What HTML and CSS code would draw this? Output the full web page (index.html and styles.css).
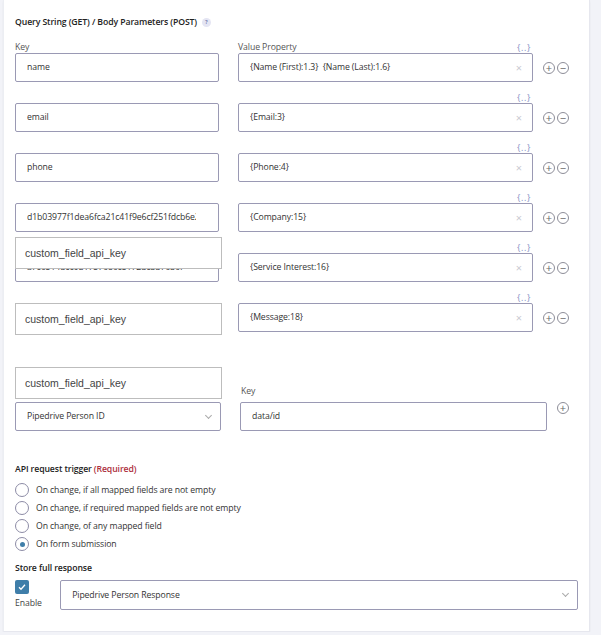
FILE: index.html
```html
<!DOCTYPE html>
<html lang="en">
<head>
<meta charset="UTF-8">
<meta name="viewport" content="width=device-width, initial-scale=1">
<title>API request settings</title>
<link rel="stylesheet" href="styles.css">
</head>
<body>
<div class="card">
  <h3 class="title">Query String (GET) / Body Parameters (POST) <span class="help">?</span></h3>

  <div class="params">
    <div class="row">
      <div class="kcol"><div class="lbl">Key</div><div class="inp"><span class="txt">name</span></div></div>
      <div class="vcol">
        <div class="lbl"><span>Value Property</span><span class="tag">{..}</span></div>
        <div class="inp val"><span class="txt">{Name (First):1.3}&nbsp; {Name (Last):1.6}</span><span class="clr">×</span></div>
      </div>
      <div class="ops"><span class="op">+</span><span class="op">−</span></div>
    </div>
    <div class="row">
      <div class="kcol"><div class="lbl"></div><div class="inp"><span class="txt">email</span></div></div>
      <div class="vcol">
        <div class="lbl"><span></span><span class="tag">{..}</span></div>
        <div class="inp val"><span class="txt">{Email:3}</span><span class="clr">×</span></div>
      </div>
      <div class="ops"><span class="op">+</span><span class="op">−</span></div>
    </div>
    <div class="row">
      <div class="kcol"><div class="lbl"></div><div class="inp"><span class="txt">phone</span></div></div>
      <div class="vcol">
        <div class="lbl"><span></span><span class="tag">{..}</span></div>
        <div class="inp val"><span class="txt">{Phone:4}</span><span class="clr">×</span></div>
      </div>
      <div class="ops"><span class="op">+</span><span class="op">−</span></div>
    </div>
    <div class="row">
      <div class="kcol">
        <div class="lbl"></div>
        <div class="inp key"><span class="txt">d1b03977f1dea6fca21c41f9e6cf251fdcb6e2a4</span></div>
        <!-- autocomplete list opened under the key field -->
        <div class="suggest pop">custom_field_api_key</div>
      </div>
      <div class="vcol">
        <div class="lbl"><span></span><span class="tag">{..}</span></div>
        <div class="inp val"><span class="txt">{Company:15}</span><span class="clr">×</span></div>
      </div>
      <div class="ops"><span class="op">+</span><span class="op">−</span></div>
    </div>
    <div class="row">
      <div class="kcol"><div class="lbl"></div><div class="inp key"><span class="txt">a7c6514bcc0d1757686c5172bc3b7636f</span></div></div>
      <div class="vcol">
        <div class="lbl"><span></span><span class="tag">{..}</span></div>
        <div class="inp val"><span class="txt">{Service Interest:16}</span><span class="clr">×</span></div>
      </div>
      <div class="ops"><span class="op">+</span><span class="op">−</span></div>
    </div>
    <div class="row">
      <div class="kcol"><div class="lbl"></div><div class="suggest">custom_field_api_key</div></div>
      <div class="vcol">
        <div class="lbl"><span></span><span class="tag">{..}</span></div>
        <div class="inp val"><span class="txt">{Message:18}</span><span class="clr">×</span></div>
      </div>
      <div class="ops"><span class="op">+</span><span class="op">−</span></div>
    </div>
  </div>

  <div class="resp">
    <div class="rcol1">
      <div class="suggest">custom_field_api_key</div>
      <div class="inp sel"><span class="txt">Pipedrive Person ID</span><span class="chev"></span></div>
    </div>
    <div class="rcol2">
      <div class="lbl">Key</div>
      <div class="inp"><span class="txt">data/id</span></div>
    </div>
    <div class="ops top"><span class="op">+</span></div>
  </div>

  <h4 class="sub">API request trigger <span class="req">(Required)</span></h4>
  <ul class="radios">
    <li><span class="radio"></span>On change, if all mapped fields are not empty</li>
    <li><span class="radio"></span>On change, if required mapped fields are not empty</li>
    <li><span class="radio"></span>On change, of any mapped field</li>
    <li><span class="radio on"></span>On form submission</li>
  </ul>

  <h4 class="sub store">Store full response</h4>
  <div class="store-row">
    <div class="enable">
      <span class="check"><svg viewBox="0 0 14 14" width="14" height="14"><path d="M4 7.2l2 2 4-4.4" fill="none" stroke="#fff" stroke-width="1.3"/></svg></span>
      <span>Enable</span>
    </div>
    <div class="inp sel wide"><span class="txt">Pipedrive Person Response</span><span class="chev"></span></div>
  </div>
</div>
</body>
</html>
```

FILE: styles.css
```css
:root{
  --bg:#f2f3f8;--card:#fff;--text:#333;--sub:#555;--line:#9a99b4;--gray:#bdbdbd;
  --tag:#8793c6;--blue:#3f7ea9;--req:#ad2e3c
}
*{box-sizing:border-box;margin:0;padding:0}
body{background:var(--bg);font-family:"Open Sans","Noto Sans",Arial,sans-serif;font-size:8.7px;letter-spacing:-.1px;color:var(--text)}
.card{background:var(--card);margin-left:3px;width:587px;padding:15px 11px 21px;border-right:1px solid #e6e7ee;border-bottom:1px solid #e6e7ee;box-shadow:0 1px 2px rgba(0,0,0,.05);border-left:1px solid #eceef3}
.title{font-size:8.7px;font-weight:600;line-height:14px;color:#222;display:flex;align-items:center;gap:5px}
.help{display:inline-block;width:9px;height:9px;border-radius:50%;background:#e4e5f3;color:#7a7fb0;font-size:5px;line-height:9px;text-align:center;font-weight:700;letter-spacing:0}

.params{margin-top:11px;display:flex;flex-direction:column;gap:8px}
.row{display:flex;align-items:flex-start}
.kcol{width:204px;position:relative}
.vcol{width:295px;margin-left:19px}
.lbl{height:13px;line-height:11px;color:var(--sub);display:flex;justify-content:space-between;align-items:flex-end}
.tag{color:var(--tag);font-size:9px;margin-right:2px;letter-spacing:.6px;line-height:10px}
.inp{height:29px;border:1px solid var(--line);border-radius:2px;padding:0 11px;line-height:27px;white-space:nowrap;position:relative;color:#333;background:#fff}
.inp.key{padding-right:22px}
.txt{display:block;overflow:hidden}
.val{padding-right:24px}
.clr{position:absolute;right:10px;top:0;color:#c9c9d2;font-size:11px}
.ops{display:flex;gap:2px;margin-left:10px;margin-top:13px;height:29px;align-items:center}
.op{width:12px;height:12px;border:1px solid #8d8d98;border-radius:50%;font-size:11px;line-height:9px;text-align:center;color:#666;letter-spacing:0}

.suggest{width:207px;height:32px;border:1px solid var(--gray);background:#fff;font-family:"Liberation Sans",Arial,sans-serif;font-size:10.5px;letter-spacing:0;color:#444;padding:0 9px;line-height:30px;white-space:nowrap}
.pop{position:absolute;top:calc(100% + 5px);left:0;z-index:2}

.resp{display:flex;margin-top:32px;align-items:flex-end}
.rcol1{width:207px;display:flex;flex-direction:column;gap:3px}
.rcol1 .sel{width:206px}
.rcol2{width:307px;margin-left:18px}
.rcol2 .lbl{height:16px;align-items:flex-start;padding-left:1px}
.ops.top{margin-top:0;align-items:flex-start;margin-left:10px}
.sel{position:relative}
.chev{position:absolute;right:9px;top:10px;width:5px;height:5px;border-right:1px solid #aaa;border-bottom:1px solid #aaa;transform:rotate(45deg)}

.sub{font-size:8.7px;font-weight:600;line-height:14px;color:#222;margin-top:31px}
.req{color:var(--req)}
.radios{list-style:none;margin-top:5px}
.radios li{height:18px;display:flex;align-items:center;gap:7px;color:#333}
.radio{width:14px;height:14px;border:1px solid #8d8ca6;border-radius:50%;display:inline-flex;align-items:center;justify-content:center}
.radio.on::after{content:"";width:5px;height:5px;border-radius:50%;background:var(--blue)}

.store{margin-top:8px}
.store-row{display:flex;margin-top:5px;align-items:flex-start}
.enable{display:flex;flex-direction:column;width:46px;gap:3px;color:#444}
.check{width:14px;height:14px;background:var(--blue);border-radius:2px;display:block}
.sel.wide{width:527px;height:30px;line-height:28px}
```
